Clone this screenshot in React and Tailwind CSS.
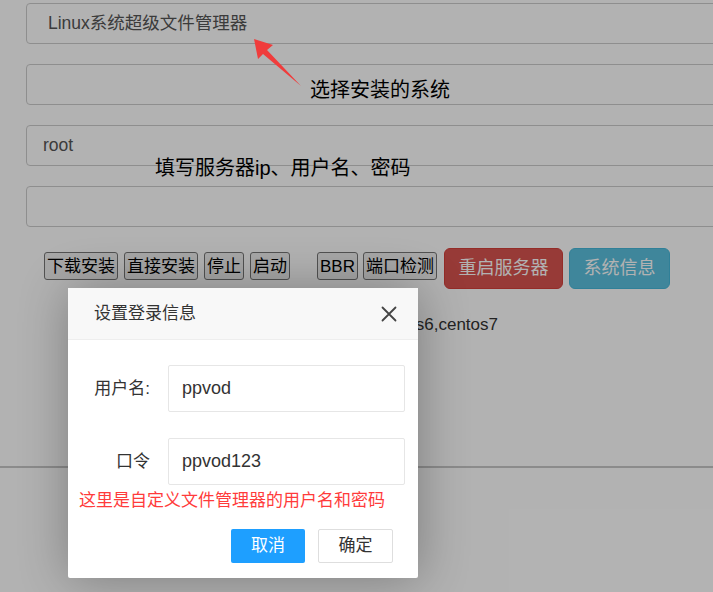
import React from "react";

const FONT = { fontFamily: '"Liberation Sans", "Noto Sans CJK SC", sans-serif' };

function PlainButton({ children }) {
  return (
    <button className="h-[28px] px-[2px] mt-[4px] border border-[#767676] bg-[#efefef] rounded-[3px] text-[17px] leading-none text-black">
      {children}
    </button>
  );
}

function Field({ label, value }) {
  return (
    <div className="flex items-center">
      <label className="w-[82px] text-right text-[17px] text-[#333]">{label}</label>
      <div className="ml-[18px] w-[237px] h-[47px] border border-[#e6e6e6] rounded-[2px] px-[13px] flex items-center text-[18px] text-[#333]">
        {value}
      </div>
    </div>
  );
}

export default function App() {
  return (
    <div style={FONT} className="relative w-[713px] h-[592px] overflow-hidden bg-white">
      {/* page under the modal */}
      <div className="pl-[26px] pt-[3px] flex flex-col gap-[20px]">
        <div className="w-[720px] h-[41px] border border-[#ccc] rounded-[4px] flex items-center pl-[21px] text-[17.5px] text-[#555]">
          Linux系统超级文件管理器
        </div>
        <div className="w-[720px] h-[41px] border border-[#ccc] rounded-[4px]" />
        <div className="w-[720px] h-[41px] border border-[#ccc] rounded-[4px] flex items-center pl-[16px] text-[17.5px] text-[#555]">
          root
        </div>
        <div className="w-[720px] h-[41px] border border-[#ccc] rounded-[4px]" />
      </div>

      <div className="flex items-start pl-[44px] mt-[21px]">
        <div className="flex gap-[6px]">
          <PlainButton>下载安装</PlainButton>
          <PlainButton>直接安装</PlainButton>
          <PlainButton>停止</PlainButton>
          <PlainButton>启动</PlainButton>
        </div>
        <div className="flex gap-[5px] ml-[27px]">
          <PlainButton>BBR</PlainButton>
          <PlainButton>端口检测</PlainButton>
        </div>
        <button className="ml-[7px] w-[119px] h-[41px] rounded-[6px] bg-[#d9534f] border border-[#d43f3a] text-white text-[18px]">
          重启服务器
        </button>
        <button className="ml-[6px] w-[101px] h-[41px] rounded-[6px] bg-[#5bc0de] border border-[#46b8da] text-white text-[18px]">
          系统信息
        </button>
      </div>

      <div className="w-[498px] text-right mt-[24px] text-[17px] leading-[24px] text-[#333]">
        当前支持的系统为centos6,centos7
      </div>

      <div className="mt-[129px] border-t-2 border-[#c8c8c8]" />

      {/* shade */}
      <div className="absolute inset-0 bg-black/30" />

      {/* modal */}
      <div className="absolute left-[68px] top-[288px] w-[350px] h-[290px] bg-white rounded-[2px] shadow-[1px_1px_50px_rgba(0,0,0,0.3)] flex flex-col">
        <div className="h-[52px] bg-[#f8f8f8] border-b border-[#eee] flex items-center justify-between pl-[26px] pr-[21px]">
          <span className="text-[17px] text-[#333]">设置登录信息</span>
          <svg width="16" height="16" viewBox="0 0 16 16" className="text-[#444]">
            <path d="M1.5 1.5L14.5 14.5M14.5 1.5L1.5 14.5" stroke="currentColor" strokeWidth="1.8" strokeLinecap="round" />
          </svg>
        </div>
        <div className="pt-[25px] flex flex-col gap-[26px]">
          <Field label="用户名:" value="ppvod" />
          <Field label="口令" value="ppvod123" />
        </div>
        <p className="pl-[11px] mt-[4px] text-[17px] leading-[24px] text-[#ff3b3b]">这里是自定义文件管理器的用户名和密码</p>
        <div className="flex justify-end gap-[13px] pr-[25px] mt-[16px]">
          <button className="w-[74px] h-[34px] rounded-[2px] bg-[#1e9fff] text-white text-[17px]">取消</button>
          <button className="w-[75px] h-[34px] rounded-[2px] bg-white border border-[#dedede] text-[#333] text-[17px]">确定</button>
        </div>
      </div>

      {/* annotations */}
      <svg className="absolute left-0 top-0 pointer-events-none" width="713" height="592" viewBox="0 0 713 592">
        <polygon points="254,39 273,45 267,50 301,86 263,54 258,59" fill="#f03c3c" />
      </svg>
      <span className="absolute left-[310px] top-[78px] text-[20px] leading-[24px] text-black">选择安装的系统</span>
      <span className="absolute left-[155px] top-[156px] text-[20px] leading-[24px] text-black">填写服务器ip、用户名、密码</span>
    </div>
  );
}
